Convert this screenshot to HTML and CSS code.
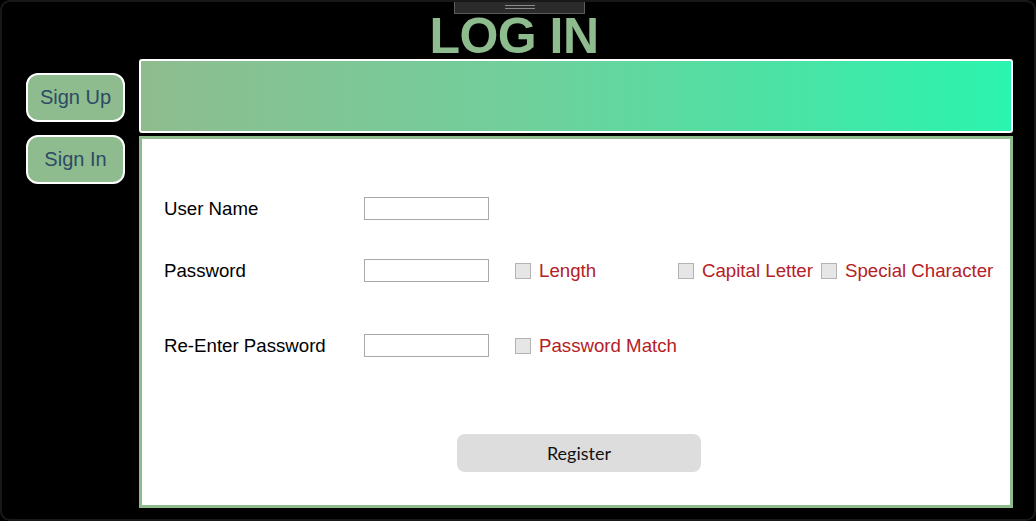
FILE: index.html
```html
<!DOCTYPE html>
<html lang="en">
<head>
<meta charset="utf-8">
<title>LOG IN</title>
<link rel="stylesheet" href="styles.css">
</head>
<body>
<div class="window">
  <div class="grip"><span class="grip-line"></span><span class="grip-line"></span></div>
  <h1 class="title">LOG IN</h1>
  <div class="main">
    <nav class="sidebar">
      <button class="side-btn">Sign Up</button>
      <button class="side-btn">Sign In</button>
    </nav>
    <div class="content">
      <div class="banner"></div>
      <form class="panel">
        <div class="row">
          <label class="cell-label">User Name</label>
          <div class="cell-input"><input class="field" type="text"></div>
        </div>
        <div class="row row-2">
          <label class="cell-label">Password</label>
          <div class="cell-input"><input class="field" type="password"></div>
          <div class="check cell-length"><input class="box" type="checkbox"><span class="check-text">Length</span></div>
          <div class="check cell-capital"><input class="box" type="checkbox"><span class="check-text">Capital Letter</span></div>
          <div class="check"><input class="box" type="checkbox"><span class="check-text">Special Character</span></div>
        </div>
        <div class="row row-3">
          <label class="cell-label">Re-Enter Password</label>
          <div class="cell-input"><input class="field" type="password"></div>
          <div class="check"><input class="box" type="checkbox"><span class="check-text">Password Match</span></div>
        </div>
        <div class="actions">
          <button type="button" class="register">Register</button>
        </div>
      </form>
    </div>
  </div>
</div>
</body>
</html>
```

FILE: styles.css
```css
* { box-sizing: border-box; }

html, body {
  margin: 0;
  padding: 0;
  background: #000;
}

.window {
  position: relative;
  width: 1036px;
  height: 521px;
  border: 2px solid #181818;
  border-radius: 10px;
  background: #000;
  font-family: "Liberation Sans", Arial, sans-serif;
  overflow: hidden;
}

.grip {
  position: absolute;
  top: -2px;
  left: 452px;
  width: 131px;
  height: 14px;
  background: #2b2b2b;
  border: 1px solid #5c5c5c;
  border-top: none;
  display: flex;
  flex-direction: column;
  align-items: center;
  padding-top: 5px;
  gap: 2px;
}

.grip-line {
  display: block;
  width: 30px;
  height: 1px;
  background: #8a8a8a;
}

.title {
  margin: 0;
  height: 57px;
  padding-top: 9px;
  font-size: 50px;
  line-height: 50px;
  font-weight: bold;
  color: #8fbc8f;
  text-align: center;
  padding-right: 8px;
  letter-spacing: -0.5px;
}

.main {
  display: flex;
  gap: 14px;
  padding-left: 24px;
}

.sidebar {
  display: flex;
  flex-direction: column;
  gap: 13px;
  padding-top: 14px;
}

.side-btn {
  width: 99px;
  height: 49px;
  background: #8fbc8f;
  border: 2px solid #fff;
  border-radius: 12px;
  color: #2d4a66;
  font-family: "Liberation Sans", Arial, sans-serif;
  font-size: 20px;
  padding: 0;
}

.content {
  width: 874px;
  display: flex;
  flex-direction: column;
  gap: 3px;
}

.banner {
  height: 74px;
  border: 2px solid #fff;
  border-radius: 3px;
  background: linear-gradient(to right, #8fbc8f 0%, #6fd09c 45%, #2af4ae 100%);
}

.panel {
  height: 372px;
  border: 3px solid #8fbc8f;
  background: #fff;
  padding: 58px 0 0 22px;
  margin: 0;
  display: flex;
  flex-direction: column;
}

.row {
  display: flex;
  align-items: center;
  height: 23px;
  font-size: 18.67px;
}

.row-2 { margin-top: 39px; }
.row-3 { margin-top: 52px; }

.cell-label {
  width: 200px;
  color: #000;
}

.cell-input {
  width: 147px;
  display: flex;
}

.field {
  width: 125px;
  height: 23px;
  border: 1px solid #a9a9a9;
  background: #fff;
  margin: 0;
  padding: 0 2px;
}

.check {
  display: flex;
  align-items: center;
  padding-left: 4px;
}

.cell-length { width: 163px; }
.cell-capital { width: 143px; }

.box {
  appearance: none;
  -webkit-appearance: none;
  width: 16px;
  height: 16px;
  margin: 0 8px 0 0;
  background: #e6e6e6;
  border: 1px solid #b3b3b3;
  border-radius: 0;
}

.check-text {
  color: #b52026;
}

.actions {
  margin-top: 77px;
  padding-left: 293px;
  display: flex;
}

.register {
  width: 244px;
  height: 38px;
  background: #dddddd;
  border: none;
  border-radius: 8px;
  font-family: Lato, "Open Sans", sans-serif;
  font-size: 18px;
  color: #111;
  padding: 0;
}
```
